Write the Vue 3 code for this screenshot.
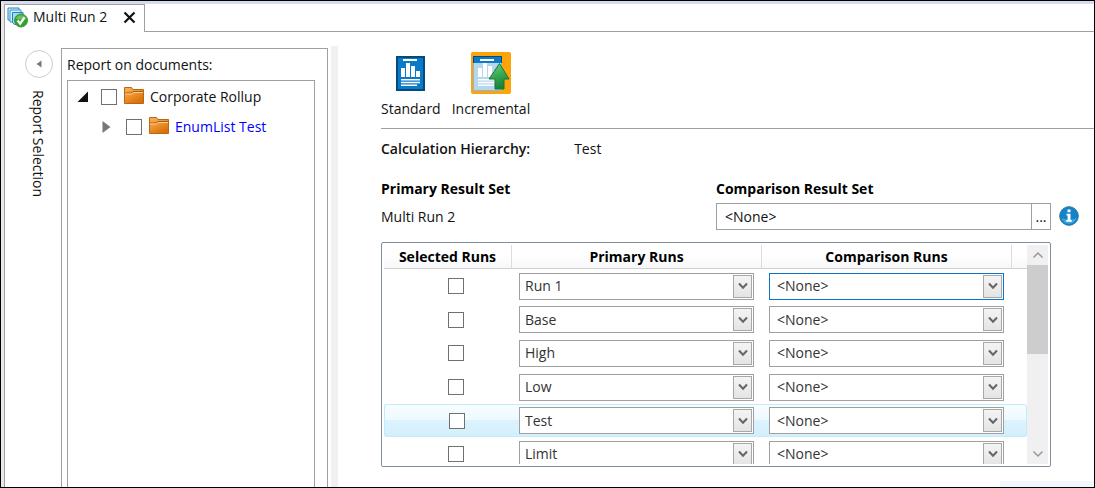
<script setup>
import { ref } from 'vue'

const tree = ref([
  { name: 'Corporate Rollup', level: 0, open: true, checked: false },
  { name: 'EnumList Test', level: 1, open: false, checked: false },
])

const names = ['Run 1', 'Base', 'High', 'Low', 'Test', 'Limit']
const runs = ref(
  names.map((name) => ({ primary: name, comparison: '<None>', checked: false }))
)
const highlighted = 4
const active = 0
const comparisonSet = ref('<None>')
</script>

<template>
  <div class="window">
    <header class="tabs">
      <div class="tab">
        <svg class="tab-icon" width="21" height="21" viewBox="0 0 21 21" aria-hidden="true">
          <path d="M1 1h11v12H1z" fill="#d6eefb" stroke="#1b82c4" />
          <path d="M3 3h11v12H3z" fill="#d6eefb" stroke="#3b9ad4" />
          <path d="M5.500 5.500h10.500v12H7.500l-2-2z" fill="#a5daf8" stroke="#1b82c4" />
          <circle cx="14" cy="13.500" r="6.500" fill="#35a032" stroke="#3f9440" />
          <path d="M9 11.500a5.300 5 0 0 1 10 0q-5 2.500-10 0z" fill="#6cc35c" />
          <path d="M10.500 13.500l2.700 3.200 4.300-6.200" fill="none" stroke="#fff" stroke-width="2.200" />
        </svg>
        <span class="tab-title">Multi Run 2</span>
        <button class="close" aria-label="Close tab">
          <svg width="13" height="13" viewBox="0 0 13 13"><path d="M1.500 1.500l10 10M11.500 1.500l-10 10" stroke="#111" stroke-width="2.200" /></svg>
        </button>
      </div>
      <div class="tab-rest"></div>
    </header>

    <div class="body">
      <aside class="rail">
        <button class="collapse" aria-label="Collapse report selection">
          <svg width="6" height="8" viewBox="0 0 6 8"><path d="M5.500 0.500v7L0.500 4z" fill="#777" /></svg>
        </button>
        <span class="rail-title">Report Selection</span>
      </aside>

      <section class="documents">
        <h2 class="documents-title">Report on documents:</h2>
        <ul class="tree">
          <li v-for="node in tree" :key="node.name" class="node" :class="{ child: node.level }">
            <button class="expander" :aria-label="'Toggle ' + node.name">
              <svg v-if="node.open" width="12" height="12" viewBox="0 0 12 12"><path d="M11 0.500V11H0.500z" fill="#111" /></svg>
              <svg v-else width="12" height="12" viewBox="0 0 12 12"><path d="M0.500 0L8.500 6l-8 6z" fill="#777" /></svg>
            </button>
            <label class="node-label">
              <input v-model="node.checked" type="checkbox" class="check" />
              <svg width="20" height="17" viewBox="0 0 20 17" aria-hidden="true">
                <defs>
                  <linearGradient :id="'folder' + node.level" x1="0" y1="0" x2="0.600" y2="1">
                    <stop offset="0" stop-color="#f6b45c" />
                    <stop offset="0.500" stop-color="#ee9530" />
                    <stop offset="1" stop-color="#d97008" />
                  </linearGradient>
                </defs>
                <path d="M0.500 16.500V0.500h7l1.500 2h10.500v14z" :fill="'url(#folder' + node.level + ')'" stroke="#b9661a" />
                <path d="M1 6h6l2-1.500h10" fill="none" stroke="#a85c18" />
                <path d="M1 7h6.500l2-1.500H19" fill="none" stroke="#fbd08f" />
              </svg>
              <span>{{ node.name }}</span>
            </label>
          </li>
        </ul>
      </section>
      <div class="splitter"></div>

      <main class="main">
        <nav class="modes">
          <button class="mode">
            <span class="mode-icon">
              <svg width="29" height="35" viewBox="0 0 29 35" aria-hidden="true">
                <path d="M1 1h27v33H1z" fill="#0a7bc9" stroke="#044b7d" stroke-width="2" />
                <path d="M7 3h14v2H7zM5 12h4v9H5zM10 7h4v14h-4zM15 10h4v11h-4zM20 15h4v6h-4zM5 23h19v1.500H5zM5 25.700h19v1.500H5zM5 28.400h16v1.500H5z" fill="#fff" />
              </svg>
            </span>
            <span>Standard</span>
          </button>
          <button class="mode">
            <span class="mode-icon selected">
              <svg width="40" height="42" viewBox="0 0 40 42" aria-hidden="true">
                <defs>
                  <linearGradient id="arrow" x1="0" y1="0" x2="0.300" y2="1">
                    <stop offset="0" stop-color="#6fcf82" />
                    <stop offset="0.500" stop-color="#3dac58" />
                    <stop offset="1" stop-color="#188538" />
                  </linearGradient>
                </defs>
                <path d="M2 4h29v35H2z" fill="#b5d7ee" />
                <path d="M2.500 11v27.500h28V11" fill="none" stroke="#8bb8d8" />
                <path d="M2 4h29v7H2z" fill="#0a7bc9" />
                <path d="M2.500 11V4.500h28V11" fill="none" stroke="#044b7d" />
                <path d="M9 7h14v2H9zM7 16h4v9H7zM12 11h4v14h-4zM17 14h4v11h-4zM22 19h4v6h-4zM7 27h19v1.500H7zM7 29.700h19v1.500H7zM7 32.400h16v1.500H7z" fill="#fff" />
                <path d="M28.500 11.500L38 27h-5v10h-9V27h-6z" fill="url(#arrow)" stroke="#187536" />
              </svg>
            </span>
            <span>Incremental</span>
          </button>
        </nav>

        <dl class="hierarchy">
          <dt>Calculation Hierarchy:</dt>
          <dd>Test</dd>
        </dl>

        <div class="sets">
          <div class="set">
            <h3>Primary Result Set</h3>
            <p>Multi Run 2</p>
          </div>
          <div class="set">
            <label class="set-title" for="comparison-set">Comparison Result Set</label>
            <div class="picker">
              <input id="comparison-set" v-model="comparisonSet" type="text" />
              <button class="browse" aria-label="Browse result sets">...</button>
            </div>
          </div>
          <button class="info" aria-label="Information">
            <svg width="20" height="20" viewBox="0 0 20 20">
              <circle cx="10" cy="10" r="9.300" fill="#1583c8" stroke="#2c6f9e" />
              <path d="M2.500 12a7.800 7.800 0 0 0 15 0q-7 3-15 0z" fill="#3da5df" />
              <path d="M8.500 3.500h3v2.700h-3zM7.500 7.800h4v6.200h1.300v1.700H7.200V14h1.400V9.500H7.500z" fill="#fff" />
            </svg>
          </button>
        </div>

        <div class="grid">
          <div class="rows">
            <table>
              <colgroup>
                <col class="c-check" />
                <col />
                <col />
                <col class="c-end" />
              </colgroup>
              <thead>
                <tr>
                  <th>Selected Runs</th>
                  <th>Primary Runs</th>
                  <th>Comparison Runs</th>
                  <td></td>
                </tr>
              </thead>
              <tbody>
                <tr v-for="(run, i) in runs" :key="i" :class="{ hot: i === highlighted }">
                  <td class="center">
                    <input v-model="run.checked" type="checkbox" class="check" :aria-label="'Select ' + run.primary" />
                  </td>
                  <td>
                    <div class="combo">
                      <select v-model="run.primary" aria-label="Primary run">
                        <option v-for="n in names" :key="n">{{ n }}</option>
                      </select>
                      <span class="drop"><svg width="10" height="8" viewBox="0 0 10 8"><path d="M1 1.500l4 4.300 4-4.300" fill="none" stroke="#666" stroke-width="2" /></svg></span>
                    </div>
                  </td>
                  <td>
                    <div class="combo comparison" :class="{ active: i === active }">
                      <select v-model="run.comparison" aria-label="Comparison run">
                        <option>&lt;None&gt;</option>
                        <option v-for="n in names" :key="n">{{ n }}</option>
                      </select>
                      <span class="drop"><svg width="10" height="8" viewBox="0 0 10 8"><path d="M1 1.500l4 4.300 4-4.300" fill="none" stroke="#666" stroke-width="2" /></svg></span>
                    </div>
                  </td>
                  <td></td>
                </tr>
              </tbody>
            </table>
          </div>
          <div class="scrollbar">
            <button aria-label="Scroll up"><svg width="12" height="8" viewBox="0 0 12 8"><path d="M1.500 6.500L6 2l4.500 4.500" fill="none" stroke="#999" stroke-width="1.500" /></svg></button>
            <div class="thumb"></div>
            <button class="down" aria-label="Scroll down"><svg width="12" height="8" viewBox="0 0 12 8"><path d="M1.500 1.500L6 6l4.500-4.500" fill="none" stroke="#999" stroke-width="1.500" /></svg></button>
          </div>
        </div>
        <div class="corner"></div>
      </main>
    </div>
  </div>
</template>

<style>
body {
  background: #fff;
}
</style>

<style scoped>
* {
  box-sizing: border-box;
}
.window {
  display: flex;
  flex-direction: column;
  height: 100vh;
  overflow: hidden;
  border: 1px solid #000;
  background: #fff;
  color: #111;
  font: 14px/20px "Open Sans", "Noto Sans", sans-serif;
}
button,
input,
select {
  margin: 0;
  padding: 0;
  border: 0;
  background: none;
  color: inherit;
  font: inherit;
}
h2,
h3,
p,
ul,
dl,
dd {
  margin: 0;
  padding: 0;
  font-size: inherit;
}
svg {
  display: block;
  flex: none;
}
.tabs {
  display: flex;
  height: 31px;
  flex: none;
  border-top: 3px solid #d5dcee;
  border-left: 3px solid #eae6ea;
}
.tab {
  display: flex;
  align-items: center;
  padding: 0 8px 3px 2px;
  border: 1px solid #a0a0a0;
  border-bottom: 0;
}
.tab-title {
  margin: 0 16px 0 5px;
}
.tab-rest {
  flex: 1;
  border-bottom: 1px solid #a0a0a0;
}
.body {
  display: flex;
  flex: 1;
  min-height: 0;
  border-left: 3px solid #eae6ea;
}
.rail {
  display: flex;
  flex-direction: column;
  align-items: center;
  width: 57px;
  padding: 18px 0 0 12px;
  border-left: 1px solid #a0a0a0;
}
.collapse {
  display: flex;
  align-items: center;
  justify-content: center;
  width: 28px;
  height: 28px;
  border: 1px solid #ccc;
  border-radius: 50%;
}
.rail-title {
  margin: 12px 3px 0 0;
  writing-mode: vertical-rl;
  white-space: nowrap;
}
.documents {
  display: flex;
  flex-direction: column;
  width: 267px;
  flex: none;
  margin-top: 16px;
  padding: 6px 12px 0 5px;
  border: 1px solid #a0a0a0;
  border-bottom: 0;
}
.documents-title {
  font-weight: 400;
}
.tree {
  flex: 1;
  margin-top: 5px;
  padding: 1px 9px;
  list-style: none;
  border: 1px solid #a0a0a0;
  border-bottom: 0;
}
.node {
  display: flex;
  align-items: center;
  height: 30px;
}
.child {
  margin-left: 25px;
}
.expander {
  margin-right: 12px;
}
.node-label {
  display: flex;
  align-items: center;
  white-space: nowrap;
}
.node-label svg {
  margin: 0 6px 3px 7px;
}
.child .node-label {
  color: #00f;
}
.check {
  display: block;
  appearance: none;
  width: 16px;
  height: 16px;
  border: 1px solid #707070;
  background: #fff;
}
.splitter {
  flex: none;
  width: 7px;
  margin: 14px 0 0 3px;
  background: #f0f0f0;
}
.main {
  display: flex;
  flex-direction: column;
  flex: 1;
  min-width: 0;
  padding: 20px 0 0 43px;
}
.modes {
  display: flex;
  gap: 11px;
  height: 77px;
  flex: none;
  border-bottom: 1px solid #a0a0a0;
}
.mode {
  display: flex;
  flex-direction: column;
  align-items: center;
  gap: 5px;
  height: 68px;
}
.mode-icon {
  display: flex;
  align-items: center;
  justify-content: center;
  height: 42px;
}
.selected {
  border-radius: 2px;
  background: #fca40a;
}
.hierarchy {
  display: flex;
  gap: 44px;
  margin-top: 10px;
}
dt {
  font-weight: 600;
}
.sets {
  display: flex;
  align-items: flex-end;
  margin-top: 20px;
  padding-right: 15px;
}
.set {
  flex: 1;
}
h3,
.set-title {
  display: block;
  color: #000;
  font-weight: 700;
}
.set p {
  height: 27px;
  line-height: 27px;
}
.set p,
.picker {
  margin-top: 4px;
}
.picker {
  display: flex;
  height: 27px;
  border: 1px solid #a0a0a0;
}
.picker input {
  flex: 1;
  min-width: 0;
  padding-left: 8px;
}
.browse {
  width: 19px;
  border-left: 1px solid #a0a0a0;
}
.info {
  margin: 0 0 4px 8px;
}
.grid {
  display: flex;
  height: 225px;
  flex: none;
  margin: 12px 43px 0 0;
  padding: 2px;
  border: 1px solid #828f9e;
  border-radius: 2px;
}
.rows {
  flex: 1;
  overflow: hidden;
}
table {
  width: 100%;
  table-layout: fixed;
  border-spacing: 0;
}
.c-check {
  width: 128px;
}
.c-end {
  width: 15px;
}
th,
td {
  padding: 0;
}
thead th,
thead td {
  height: 24px;
  border-right: 1px solid #ddd;
  border-bottom: 1px solid #d0d0d0;
  background: linear-gradient(#fff 40%, #f7f8fa);
  color: #000;
  font-weight: 700;
}
thead td {
  border-right: 0;
}
tbody td {
  height: 34px;
  border: 1px solid transparent;
  border-width: 1px 0;
}
tbody tr:nth-child(3n + 2) td {
  height: 33px;
}
.center .check {
  margin: 0 auto;
}
.center {
  padding-left: 16px;
}
.hot td {
  border-color: #c4ebfb;
  background: linear-gradient(#f8fdff, #edf9ff 48%, #dcf3fe 50%, #d3effd);
}
.hot td:first-child {
  border-left-width: 1px;
  border-radius: 3px 0 0 3px;
}
.hot td:last-child {
  border-right-width: 1px;
  border-radius: 0 3px 3px 0;
}
.combo {
  display: flex;
  height: 27px;
  margin: 0 8px 0 7px;
  padding: 1px;
  border: 1px solid #a0a0a0;
  background: #fff;
  color: #333;
}
.combo.active {
  border-color: #0a74cc;
}
.combo select {
  appearance: none;
  flex: 1;
  min-width: 0;
  padding-left: 4px;
}
.comparison select {
  padding-left: 6px;
}
.drop {
  display: flex;
  align-items: center;
  justify-content: center;
  width: 19px;
  border: 1px solid #a8a8a8;
  background: linear-gradient(#f4f4f4, #e4e4e4);
}
.scrollbar {
  display: flex;
  flex-direction: column;
  width: 21px;
  background: #f0f0f0;
}
.scrollbar button {
  display: flex;
  align-items: center;
  justify-content: center;
  height: 20px;
}
.thumb {
  height: 89px;
  background: #cdcdcd;
}
.scrollbar .down {
  margin-top: auto;
}
.corner {
  align-self: flex-end;
  width: 94px;
  height: 6px;
  margin-top: auto;
  background: #f2f6fd;
}
</style>
